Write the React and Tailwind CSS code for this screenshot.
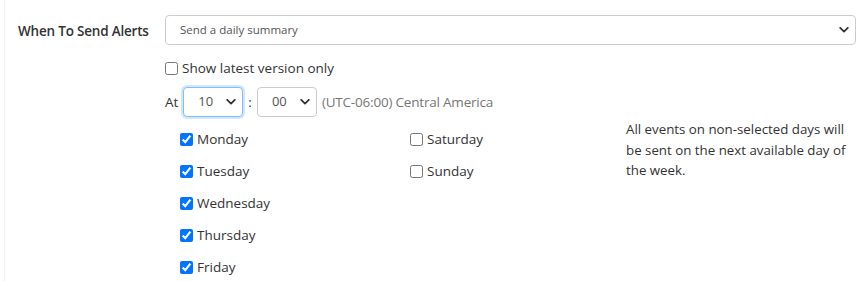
import { useState } from 'react'

const font = { fontFamily: '"Open Sans", "Noto Sans", Arial, sans-serif' }

const weekdays = [
  ['Monday', true],
  ['Tuesday', true],
  ['Wednesday', true],
  ['Thursday', true],
  ['Friday', true],
]
const weekend = [
  ['Saturday', false],
  ['Sunday', false],
]

function Chevron() {
  return (
    <svg width="10" height="7" viewBox="0 0 10 7" className="pointer-events-none absolute right-[7px] top-1/2 -translate-y-1/2">
      <path d="M1.2 1.3 5 5.1 8.8 1.3" fill="none" stroke="#333" strokeWidth="1.8" strokeLinecap="round" strokeLinejoin="round" />
    </svg>
  )
}

function DayCheck({ label, checked }) {
  const [on, setOn] = useState(checked)
  return (
    <label className="flex h-[32px] items-center text-[13.5px] text-[#333]">
      <input
        type="checkbox"
        checked={on}
        onChange={(e) => setOn(e.target.checked)}
        className="m-0 mr-[4px] h-[13px] w-[13px] accent-[#0075ff]"
      />
      {label}
    </label>
  )
}

export default function App() {
  const [latest, setLatest] = useState(false)

  return (
    <div className="h-[281px] w-[863px] bg-white pl-[4px]" style={font}>
      <div className="flex h-full border-l border-[#f1f1f1] pt-[15px]">
        <div className="w-[160px] shrink-0 pl-[13px] pt-[6px] text-[13.5px] font-semibold leading-[20px] tracking-[-0.2px] text-[#333]">
          When To Send Alerts
        </div>

        <div className="flex-1 pr-[7px]">
          <div className="relative">
            <select className="h-[30px] w-full appearance-none rounded-[4px] border border-[#ccc] bg-white pl-[14px] text-[11.5px] text-[#555] outline-none">
              <option>Send a daily summary</option>
            </select>
            <Chevron />
          </div>

          <label className="mt-[13px] flex items-center text-[13.5px] leading-[20px] text-[#333]">
            <input
              type="checkbox"
              checked={latest}
              onChange={(e) => setLatest(e.target.checked)}
              className="m-0 mr-[4px] h-[13px] w-[13px] accent-[#0075ff]"
            />
            Show latest version only
          </label>

          <div className="mt-[9px] flex items-center text-[13.5px] text-[#333]">
            <span className="mr-[5px]">At</span>
            <div className="relative">
              <select className="h-[30px] w-[60px] appearance-none rounded-[4px] border border-[#80bdff] bg-white pl-[14px] text-[13px] text-[#555] shadow-[0_0_0_2px_rgba(0,123,255,0.18)] outline-none">
                <option>10</option>
              </select>
              <Chevron />
            </div>
            <span className="mx-[5px]">:</span>
            <div className="relative">
              <select className="h-[30px] w-[60px] appearance-none rounded-[4px] border border-[#ccc] bg-white pl-[14px] text-[13px] text-[#555] outline-none">
                <option>00</option>
              </select>
              <Chevron />
            </div>
            <span className="ml-[5px] tracking-[-0.2px] text-[#777]">(UTC-06:00) Central America</span>
          </div>

          <div className="mt-[6px] flex">
            <div className="w-[245px] pl-[15px]">
              {weekdays.map(([d, c]) => (
                <DayCheck key={d} label={d} checked={c} />
              ))}
            </div>
            <div className="w-[216px]">
              {weekend.map(([d, c]) => (
                <DayCheck key={d} label={d} checked={c} />
              ))}
            </div>
            <p className="-mt-[4px] w-[230px] text-[13.3px] leading-[20.5px] text-[#333]">
              All events on non-selected days will be sent on the next available day of the week.
            </p>
          </div>
        </div>
      </div>
    </div>
  )
}
